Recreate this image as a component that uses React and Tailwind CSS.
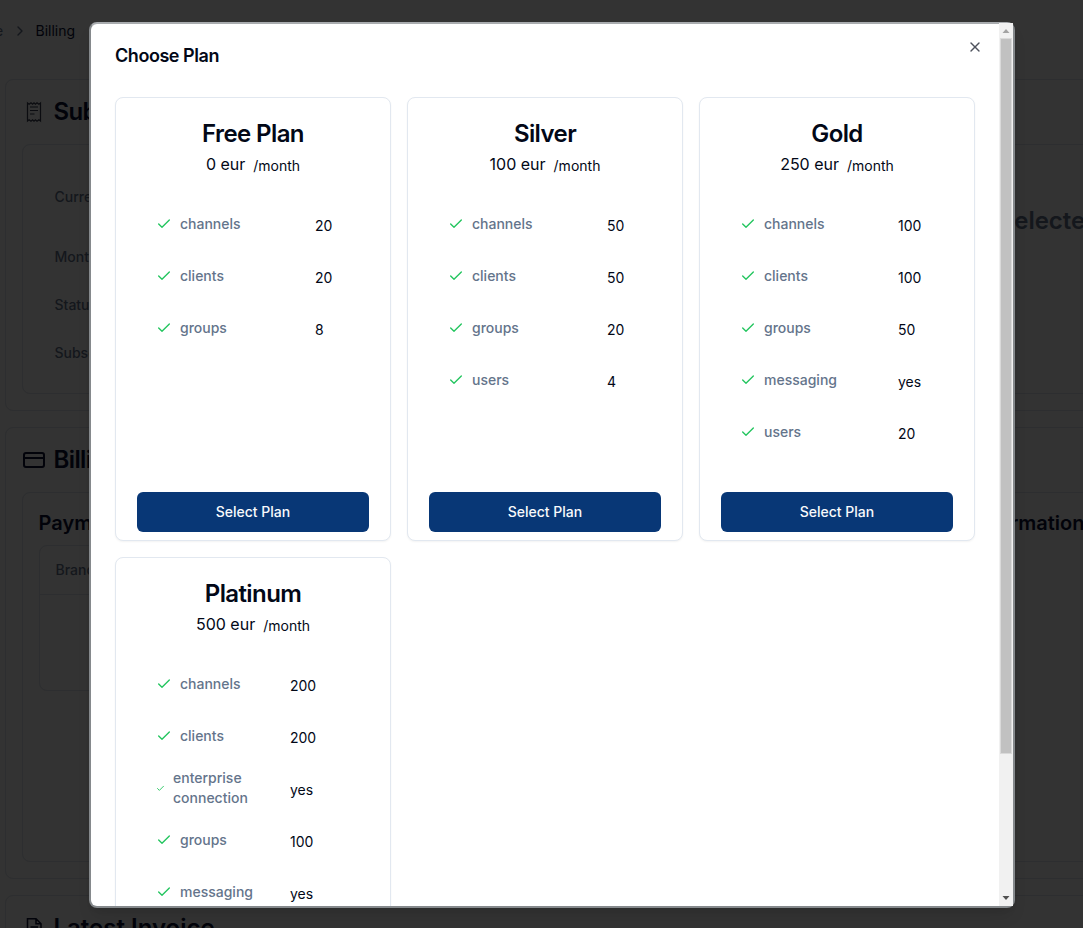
import React from "react";
import { Check, X, ChevronRight, CreditCard } from "lucide-react";

const plans = [
  { name: "Free Plan", price: "0 eur", valueCol: "w-[75px]", features: [["channels", "20"], ["clients", "20"], ["groups", "8"]] },
  { name: "Silver", price: "100 eur", valueCol: "w-[75px]", features: [["channels", "50"], ["clients", "50"], ["groups", "20"], ["users", "4"]] },
  { name: "Gold", price: "250 eur", valueCol: "w-[76px]", features: [["channels", "100"], ["clients", "100"], ["groups", "50"], ["messaging", "yes"], ["users", "20"]] },
  { name: "Platinum", price: "500 eur", valueCol: "w-[100px]", features: [["channels", "200"], ["clients", "200"], ["enterprise connection", "yes"], ["groups", "100"], ["messaging", "yes"]] },
];

function Feature({ label, value, valueCol }) {
  const wraps = label.includes(" ");
  return (
    <li className="flex h-[52px] items-center">
      <div className="flex flex-1 items-center text-sm font-medium text-[#64748b]">
        {wraps ? (
          <Check className="mr-2 h-[9px] w-[9px] shrink-0 text-[#22c55e]" strokeWidth={2.4} />
        ) : (
          <Check className="mr-2 h-4 w-4 shrink-0 text-[#22c55e]" strokeWidth={2} />
        )}
        <span className={wraps ? "w-20" : ""}>{label}</span>
      </div>
      <div className={`${valueCol} pt-[3px] text-sm leading-5`}>{value}</div>
    </li>
  );
}

function PlanCard({ plan }) {
  return (
    <section className="flex min-h-[444px] flex-col rounded-lg border border-[#e2e8f0] bg-white shadow-xs">
      <h3 className="mt-6 text-center text-2xl leading-6 font-semibold tracking-tight">{plan.name}</h3>
      <div className="mt-[6px] flex h-6 items-center justify-center gap-2">
        <span className="text-base">{plan.price}</span>
        <span className="pt-[3px] text-sm">/month</span>
      </div>
      <ul className="mt-[22px] pl-10">
        {plan.features.map(([label, value]) => (
          <Feature key={label} label={label} value={value} valueCol={plan.valueCol} />
        ))}
      </ul>
      <button className="mx-[21px] mt-auto mb-2 h-10 rounded-md bg-[#083776] text-sm font-medium text-slate-50">Select Plan</button>
    </section>
  );
}

function Receipt() {
  return (
    <svg viewBox="0 0 22 22" className="h-[22px] w-[22px] text-[#0b0c10]" fill="none" stroke="currentColor" strokeWidth="1.2">
      <path d="M4.500 2l1.600 1.300L8 1.800l1.600 1.300L11 1.800l1.400 1.300L14 1.800l1.900 1.500L17.500 2v18l-1.600-1.300-1.900 1.500-1.600-1.300-1.400 1.300-1.400-1.300L8 20.200l-1.900-1.500L4.500 20z" />
      <path d="M7 6h8M7 9.500h8M7 13h4.500" />
    </svg>
  );
}

function Invoice() {
  return (
    <svg viewBox="0 0 22 22" className="h-[22px] w-[22px]" fill="none" stroke="currentColor" strokeWidth="1.5">
      <path d="M4.500 1.800h8.500l5 5v13.400H4.500zM13 1.800v5h5M7.500 10h7.500M7.500 13h7.500M7.500 16h7.500" />
    </svg>
  );
}

function Billing() {
  return (
    <main className="flex h-[928px] w-[1083px] flex-col overflow-hidden bg-[#333333] text-[#02030a]">
      <nav className="flex h-[79px] shrink-0 items-start gap-2 pt-[21px] text-sm leading-5">
        <span className="-ml-[5px] w-[8.5px] text-[#14171c]">e</span>
        <ChevronRight className="mt-[2px] h-4 w-4 text-[#14171c]" strokeWidth={2} />
        <span>Billing</span>
      </nav>
      <section className="ml-[5px] h-[332px] w-[1100px] shrink-0 rounded-lg border border-[#2d2e30] pl-[17px]">
        <h2 className="flex h-16 items-center gap-2 text-2xl font-semibold tracking-tight"><Receipt /><span className="pl-[0.5px]">Subscription</span></h2>
        <div className="-ml-px flex h-[250px] justify-between rounded-lg border border-[#2d2e30] pl-[31.5px] text-sm leading-5 font-medium text-[#14171c]">
          <div className="flex flex-col pt-[42px]">
            <span>Current Plan</span>
            <span className="mt-10">Monthly Price</span>
            <span className="mt-7">Status</span>
            <span className="mt-7">Subscription</span>
          </div>
          <div className="w-[102px] pt-[60px] text-2xl leading-8 font-semibold">selected</div>
        </div>
      </section>
      <section className="mt-4 ml-[5px] h-[452px] w-[1100px] shrink-0 rounded-lg border border-[#2d2e30] pl-[17px]">
        <h2 className="flex h-16 items-center gap-[7.5px] text-2xl font-semibold tracking-tight"><CreditCard className="-ml-px h-6 w-6" />Billing</h2>
        <div className="-ml-px flex h-[370px] justify-between rounded-lg border border-[#2d2e30] pt-4 pl-[15.5px]">
          <div className="w-[500px]">
            <h3 className="text-xl leading-7 font-semibold">Payment Methods</h3>
            <div className="mt-2 h-[146px] rounded-lg border border-[#2d2e30] text-sm font-medium text-[#14171c]">
              <div className="flex h-[49px] items-center border-b border-[#2d2e30] px-4">Brand</div>
            </div>
          </div>
          <h3 className="w-[194px] text-xl leading-7 font-semibold">Billing Information</h3>
        </div>
      </section>
      <section className="mt-4 ml-[5px] h-[100px] w-[1100px] shrink-0 rounded-lg border border-[#2d2e30] pl-[17px]">
        <h2 className="flex h-16 items-center gap-[8.5px] text-2xl font-semibold"><Invoice />Latest Invoice</h2>
      </section>
    </main>
  );
}

function Scrollbar() {
  return (
    <div className="-mt-px flex w-[14px] shrink-0 flex-col items-center bg-[#f1f1f1]">
      <svg viewBox="0 0 14 15" className="h-[15px] w-[14px] shrink-0"><path d="M3.500 10L7 6l3.500 4z" fill="#a3a3a3" /></svg>
      <div className="h-[716px] w-3 border border-[#dadada] bg-[#c1c1c1]" />
      <svg viewBox="0 0 14 14" className="mt-auto h-[14px] w-[14px] shrink-0"><path d="M3.500 4L7 8l3.500-4z" fill="#505050" /></svg>
    </div>
  );
}

export default function App() {
  return (
    <div className="relative h-[928px] w-[1083px] overflow-hidden font-[Inter,sans-serif]">
      <Billing />
      <div role="dialog" className="absolute top-[22px] left-[89px] flex h-[886px] w-[926px] rounded-lg border-2 border-[#85898c] border-t-[#a9acaf] bg-white text-[#020817] shadow-lg">
        <div className="min-w-0 flex-1 overflow-hidden px-6">
          <header className="flex h-[73px] justify-between">
            <h1 className="pt-[23px] text-lg leading-[18px] font-semibold tracking-tight">Choose Plan</h1>
            <X className="mt-[15px] -mr-2 h-4 w-4 text-[#4e525d]" />
          </header>
          <div className="grid grid-cols-3 gap-4">
            {plans.map((plan) => <PlanCard key={plan.name} plan={plan} />)}
          </div>
        </div>
        <Scrollbar />
      </div>
    </div>
  );
}
